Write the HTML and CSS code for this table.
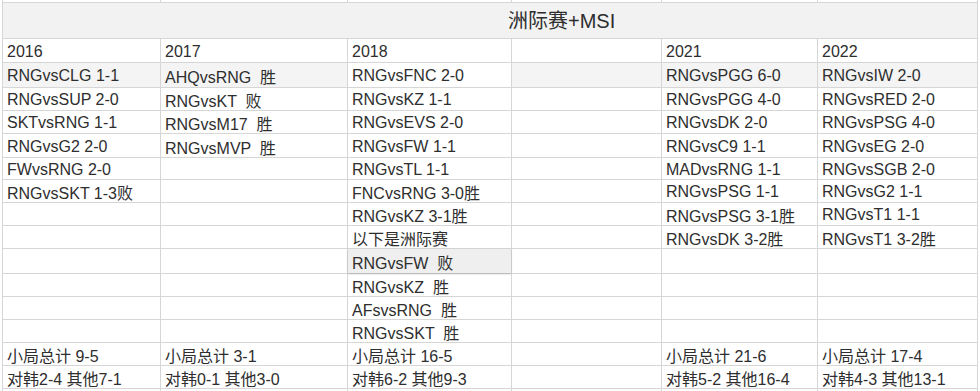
FILE: index.html
```html
<!DOCTYPE html>
<html lang="zh-CN">
<head>
<meta charset="utf-8">
<title>洲际赛+MSI</title>
<link rel="stylesheet" href="styles.css">
</head>
<body>
<div class="sheet">
  <div class="c"></div><div class="c"></div><div class="c"></div><div class="c"></div><div class="c"></div><div class="c"></div>
  <div class="c title">洲际赛+MSI</div>

  <div class="c">2016</div><div class="c">2017</div><div class="c">2018</div><div class="c"></div><div class="c">2021</div><div class="c">2022</div>

  <div class="c g">RNGvsCLG 1-1</div><div class="c g">AHQvsRNG  胜</div><div class="c">RNGvsFNC 2-0</div><div class="c g"></div><div class="c g">RNGvsPGG 6-0</div><div class="c g">RNGvsIW 2-0</div>

  <div class="c">RNGvsSUP 2-0</div><div class="c">RNGvsKT  败</div><div class="c">RNGvsKZ 1-1</div><div class="c"></div><div class="c">RNGvsPGG 4-0</div><div class="c">RNGvsRED 2-0</div>

  <div class="c">SKTvsRNG 1-1</div><div class="c">RNGvsM17  胜</div><div class="c">RNGvsEVS 2-0</div><div class="c"></div><div class="c">RNGvsDK 2-0</div><div class="c">RNGvsPSG 4-0</div>

  <div class="c">RNGvsG2 2-0</div><div class="c">RNGvsMVP  胜</div><div class="c">RNGvsFW 1-1</div><div class="c"></div><div class="c">RNGvsC9 1-1</div><div class="c">RNGvsEG 2-0</div>

  <div class="c">FWvsRNG 2-0</div><div class="c"></div><div class="c">RNGvsTL 1-1</div><div class="c"></div><div class="c">MADvsRNG 1-1</div><div class="c">RNGvsSGB 2-0</div>

  <div class="c">RNGvsSKT 1-3败</div><div class="c"></div><div class="c">FNCvsRNG 3-0胜</div><div class="c"></div><div class="c">RNGvsPSG 1-1</div><div class="c">RNGvsG2 1-1</div>

  <div class="c"></div><div class="c"></div><div class="c">RNGvsKZ 3-1胜</div><div class="c"></div><div class="c">RNGvsPSG 3-1胜</div><div class="c">RNGvsT1 1-1</div>

  <div class="c"></div><div class="c"></div><div class="c">以下是洲际赛</div><div class="c"></div><div class="c">RNGvsDK 3-2胜</div><div class="c">RNGvsT1 3-2胜</div>

  <div class="c"></div><div class="c"></div><div class="c sel">RNGvsFW  败</div><div class="c"></div><div class="c"></div><div class="c"></div>

  <div class="c"></div><div class="c"></div><div class="c">RNGvsKZ  胜</div><div class="c"></div><div class="c"></div><div class="c"></div>

  <div class="c"></div><div class="c"></div><div class="c">AFsvsRNG  胜</div><div class="c"></div><div class="c"></div><div class="c"></div>

  <div class="c"></div><div class="c"></div><div class="c">RNGvsSKT  胜</div><div class="c"></div><div class="c"></div><div class="c"></div>

  <div class="c">小局总计 9-5</div><div class="c">小局总计 3-1</div><div class="c">小局总计 16-5</div><div class="c"></div><div class="c">小局总计 21-6</div><div class="c">小局总计 17-4</div>

  <div class="c">对韩2-4 其他7-1</div><div class="c">对韩0-1 其他3-0</div><div class="c">对韩6-2 其他9-3</div><div class="c"></div><div class="c">对韩5-2 其他16-4</div><div class="c">对韩4-3 其他13-1</div>

  <div class="c"></div><div class="c"></div><div class="c"></div><div class="c"></div><div class="c"></div><div class="c"></div>
</div>
</body>
</html>
```

FILE: styles.css
```css
html, body {
  margin: 0;
  padding: 0;
  background: #ffffff;
  overflow: hidden;
}

body {
  padding-left: 2px;
  font-family: "Liberation Sans", "Noto Sans CJK SC", sans-serif;
  color: #2e2e2e;
}

.sheet {
  display: grid;
  width: 976px;
  box-sizing: border-box;
  grid-template-columns: 157px 186px 163px 149px 155px 159px;
  grid-template-rows: 2px 35px 23px 24px 22px 22px 23px 21px 22px 22px 22px 24px 22px 22px 22px 22px 22px 10px;
  gap: 1px;
  padding: 0 1px;
  background: #d6d6d6;
}

.c {
  background: #ffffff;
  padding-left: 4px;
  padding-top: 2px;
  display: flex;
  align-items: center;
  font-size: 16px;
  white-space: pre;
  overflow: hidden;
}

.g {
  background: #f4f4f4;
}

.title {
  grid-column: 1 / -1;
  background: #f2f2f2;
  font-size: 20px;
  padding-left: 505px;
  padding-top: 0;
  padding-bottom: 2px;
}

.sel {
  background: #efefef;
  box-shadow: 0 1px 2px rgba(0, 0, 0, 0.18);
  position: relative;
}
```
